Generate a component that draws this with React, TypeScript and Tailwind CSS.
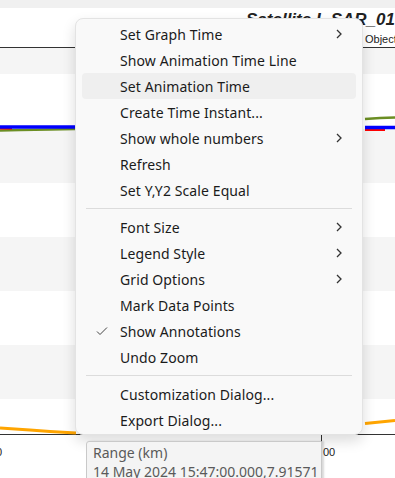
import React from "react";

type Item = { label: string; sub?: boolean; checked?: boolean; active?: boolean } | "sep";

const items: Item[] = [
  { label: "Set Graph Time", sub: true },
  { label: "Show Animation Time Line" },
  { label: "Set Animation Time", active: true },
  { label: "Create Time Instant..." },
  { label: "Show whole numbers", sub: true },
  { label: "Refresh" },
  { label: "Set Y,Y2 Scale Equal" },
  "sep",
  { label: "Font Size", sub: true },
  { label: "Legend Style", sub: true },
  { label: "Grid Options", sub: true },
  { label: "Mark Data Points" },
  { label: "Show Annotations", checked: true },
  { label: "Undo Zoom" },
  "sep",
  { label: "Customization Dialog..." },
  { label: "Export Dialog..." },
];

function Chevron() {
  return (
    <svg width="8" height="10" viewBox="0 0 8 10" fill="none">
      <path d="M2 1l4 4-4 4" stroke="#333" strokeWidth="1.3" />
    </svg>
  );
}

function Check() {
  return (
    <svg width="12" height="10" viewBox="0 0 12 10" fill="none">
      <path d="M1 5.5l3 3L11 1.5" stroke="#444" strokeWidth="1" />
    </svg>
  );
}

function ContextMenu() {
  return (
    <div className="absolute left-[75px] top-[18px] w-[288px] h-[417px] rounded-[8px] border border-[#e3e3e3] bg-[#f9f9f9] px-[6px] pt-[2px] shadow-[0_6px_14px_rgba(0,0,0,0.14)]">
      {items.map((it, i) =>
        it === "sep" ? (
          <div key={i} className="mx-[4px] my-[5px] h-px bg-[#dcdcdc]" />
        ) : (
          <div
            key={i}
            className={
              "flex h-[26px] items-center rounded-[4px] pl-[14px] pr-[13px] text-[14px] tracking-[0.1px] text-[#1b1b1b] " +
              (it.active ? "bg-[#efefef]" : "")
            }
          >
            <span className="flex w-[24px] items-center">{it.checked && <Check />}</span>
            <span className="flex-1 whitespace-nowrap">{it.label}</span>
            {it.sub && <Chevron />}
          </div>
        )
      )}
    </div>
  );
}

export default function App() {
  return (
    <div className="relative h-[478px] w-[395px] overflow-hidden bg-white font-['Noto_Sans',sans-serif]">
      {/* ヘッダー */}
      <div className="h-[8px] bg-[#f0f0f0]" />
      <div className="relative h-[39px] font-['Liberation_Sans',sans-serif]">
        <div className="whitespace-nowrap pl-[246px] pt-[2px] text-[17px] font-bold italic leading-[20px] text-[#222]">
          Satellite L SAR_01
        </div>
        <div className="pl-[365px] pt-[3px] text-[11px] leading-[12px] text-[#222]">Object</div>
      </div>
      <div className="h-px bg-[#333]" />

      {/* プロット領域 */}
      <div className="flex flex-col">
        <div className="h-[26px] bg-[#f5f5f5]" />
        <div className="h-[55px] bg-white" />
        <div className="h-[54px] bg-[#f5f5f5]" />
        <div className="h-[54px] bg-white" />
        <div className="h-[54px] bg-[#f5f5f5]" />
        <div className="h-[54px] bg-white" />
        <div className="h-[54px] bg-[#f5f5f5]" />
        <div className="h-[35px] bg-white" />
      </div>
      <div className="h-px bg-[#333]" />
      <div className="relative h-[43px] font-['Liberation_Sans',sans-serif] text-[11px] text-[#222]">
        <span className="absolute left-[-4px] top-[9px]">0</span>
        <span className="absolute left-[323px] top-[9px]">00</span>
      </div>

      {/* グラフ線 */}
      <svg className="absolute left-0 top-0" width="395" height="478" viewBox="0 0 395 478">
        <path d="M0 130.5 L20 130 L50 129.5 L75 129" stroke="#6b8e23" strokeWidth="2.5" fill="none" />
        <path d="M0 128.5 L12 128.5" stroke="#ff0000" strokeWidth="2" />
        <path d="M0 127 L75 127" stroke="#0000ff" strokeWidth="3.5" />
        <path d="M365 119 L380 118 L395 117.5" stroke="#6b8e23" strokeWidth="2.5" fill="none" />
        <path d="M365 130 L385 130" stroke="#ff0000" strokeWidth="2" />
        <path d="M365 127.5 L395 127.5" stroke="#0000ff" strokeWidth="3.5" />
        <path d="M0 428 L30 430 L50 431.5 L76 433" stroke="#ffa500" strokeWidth="3" fill="none" />
        <path d="M365 423.5 L380 422 L395 420.5" stroke="#ffa500" strokeWidth="3" fill="none" />
        <path d="M321.5 434 L321.5 442" stroke="#333" strokeWidth="1" />
      </svg>

      <ContextMenu />

      {/* ツールチップ */}
      <div className="absolute left-[86px] top-[441px] h-[40px] w-[236px] rounded-tl-[3px] border border-[#c9c9c9] bg-[#f4f4f4] px-[6px] pt-[1px] text-[14px] leading-[19px] text-[#5a5a5a] shadow-[2px_0_2px_rgba(0,0,0,0.15)]">
        <div>Range (km)</div>
        <div className="whitespace-nowrap">14 May 2024 15:47:00.000,7.91571</div>
      </div>
    </div>
  );
}
